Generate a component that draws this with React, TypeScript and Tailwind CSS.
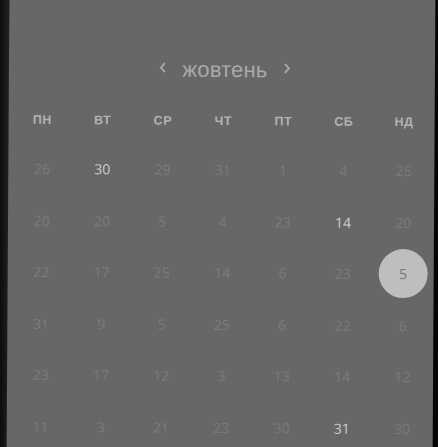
import React from "react";

const heads = ["ПН", "ВТ", "СР", "ЧТ", "ПТ", "СБ", "НД"];

type Cell = { n: number; bright?: boolean; sel?: boolean };

const rows: Cell[][] = [
  [{ n: 26 }, { n: 30, bright: true }, { n: 29 }, { n: 31 }, { n: 1 }, { n: 4 }, { n: 25 }],
  [{ n: 20 }, { n: 20 }, { n: 5 }, { n: 4 }, { n: 23 }, { n: 14, bright: true }, { n: 20 }],
  [{ n: 22 }, { n: 17 }, { n: 25 }, { n: 14 }, { n: 6 }, { n: 23 }, { n: 5, sel: true }],
  [{ n: 31 }, { n: 9 }, { n: 5 }, { n: 25 }, { n: 6 }, { n: 22 }, { n: 6 }],
  [{ n: 23 }, { n: 17 }, { n: 12 }, { n: 3 }, { n: 13 }, { n: 14 }, { n: 12 }],
  [{ n: 11 }, { n: 3 }, { n: 21 }, { n: 23 }, { n: 30 }, { n: 31, bright: true }, { n: 30 }],
];

export default function App() {
  return (
    <div className="relative w-[438px] h-[447px] overflow-hidden bg-[#050505] flex">
      <div className="w-[9px] h-full bg-gradient-to-r from-[#0c0c0c] to-[#222222] shrink-0" />
      <div
        className="-ml-[1px] -mt-[16px] w-[426px] h-[480px] shrink-0 bg-[#676767] rotate-[0.35deg] pl-[3.5px] pr-[0.5px] pt-[71px]"
        style={{ fontFamily: "'Liberation Sans', Arial, sans-serif" }}
      >
        <div className="h-[30px] flex items-center justify-center text-[#a9a9a9] pl-[3px]">
          <svg width="8" height="12" viewBox="0 0 8 12" className="mr-[15px] -mt-[4px]">
            <path d="M6 1.5 L2 6 L6 10.5" stroke="#a9a9a9" strokeWidth="1.8" fill="none" />
          </svg>
          <span className="text-[22px] leading-none tracking-[0.2px]">жовтень</span>
          <svg width="8" height="12" viewBox="0 0 8 12" className="ml-[15px] -mt-[4px]">
            <path d="M2 1.5 L6 6 L2 10.5" stroke="#a9a9a9" strokeWidth="1.8" fill="none" />
          </svg>
        </div>
        <div className="mt-[26px] grid grid-cols-7 h-[20px] items-center">
          {heads.map((h) => (
            <div key={h} className="text-center text-[12.5px] font-bold text-[#b2b2b2] tracking-[0.5px]">
              {h}
            </div>
          ))}
        </div>
        <div className="mt-[13px]" style={{ fontFamily: "'Open Sans', 'Noto Sans', sans-serif" }}>
          {rows.map((r, i) => (
            <div key={i} className="grid grid-cols-7 h-[51.5px] items-center">
              {r.map((c, j) => (
                <div key={j} className="flex items-center justify-center">
                  {c.sel ? (
                    <div className="w-[49px] h-[49px] rounded-full bg-[#bebebe] flex items-center justify-center text-[14px] text-[#767676]">
                      {c.n}
                    </div>
                  ) : (
                    <span
                      className={
                        c.bright
                          ? "text-[14px] text-[#cfcfcf] font-medium"
                          : "text-[14px] text-[#7b7b7b]"
                      }
                    >
                      {c.n}
                    </span>
                  )}
                </div>
              ))}
            </div>
          ))}
        </div>
      </div>
    </div>
  );
}
